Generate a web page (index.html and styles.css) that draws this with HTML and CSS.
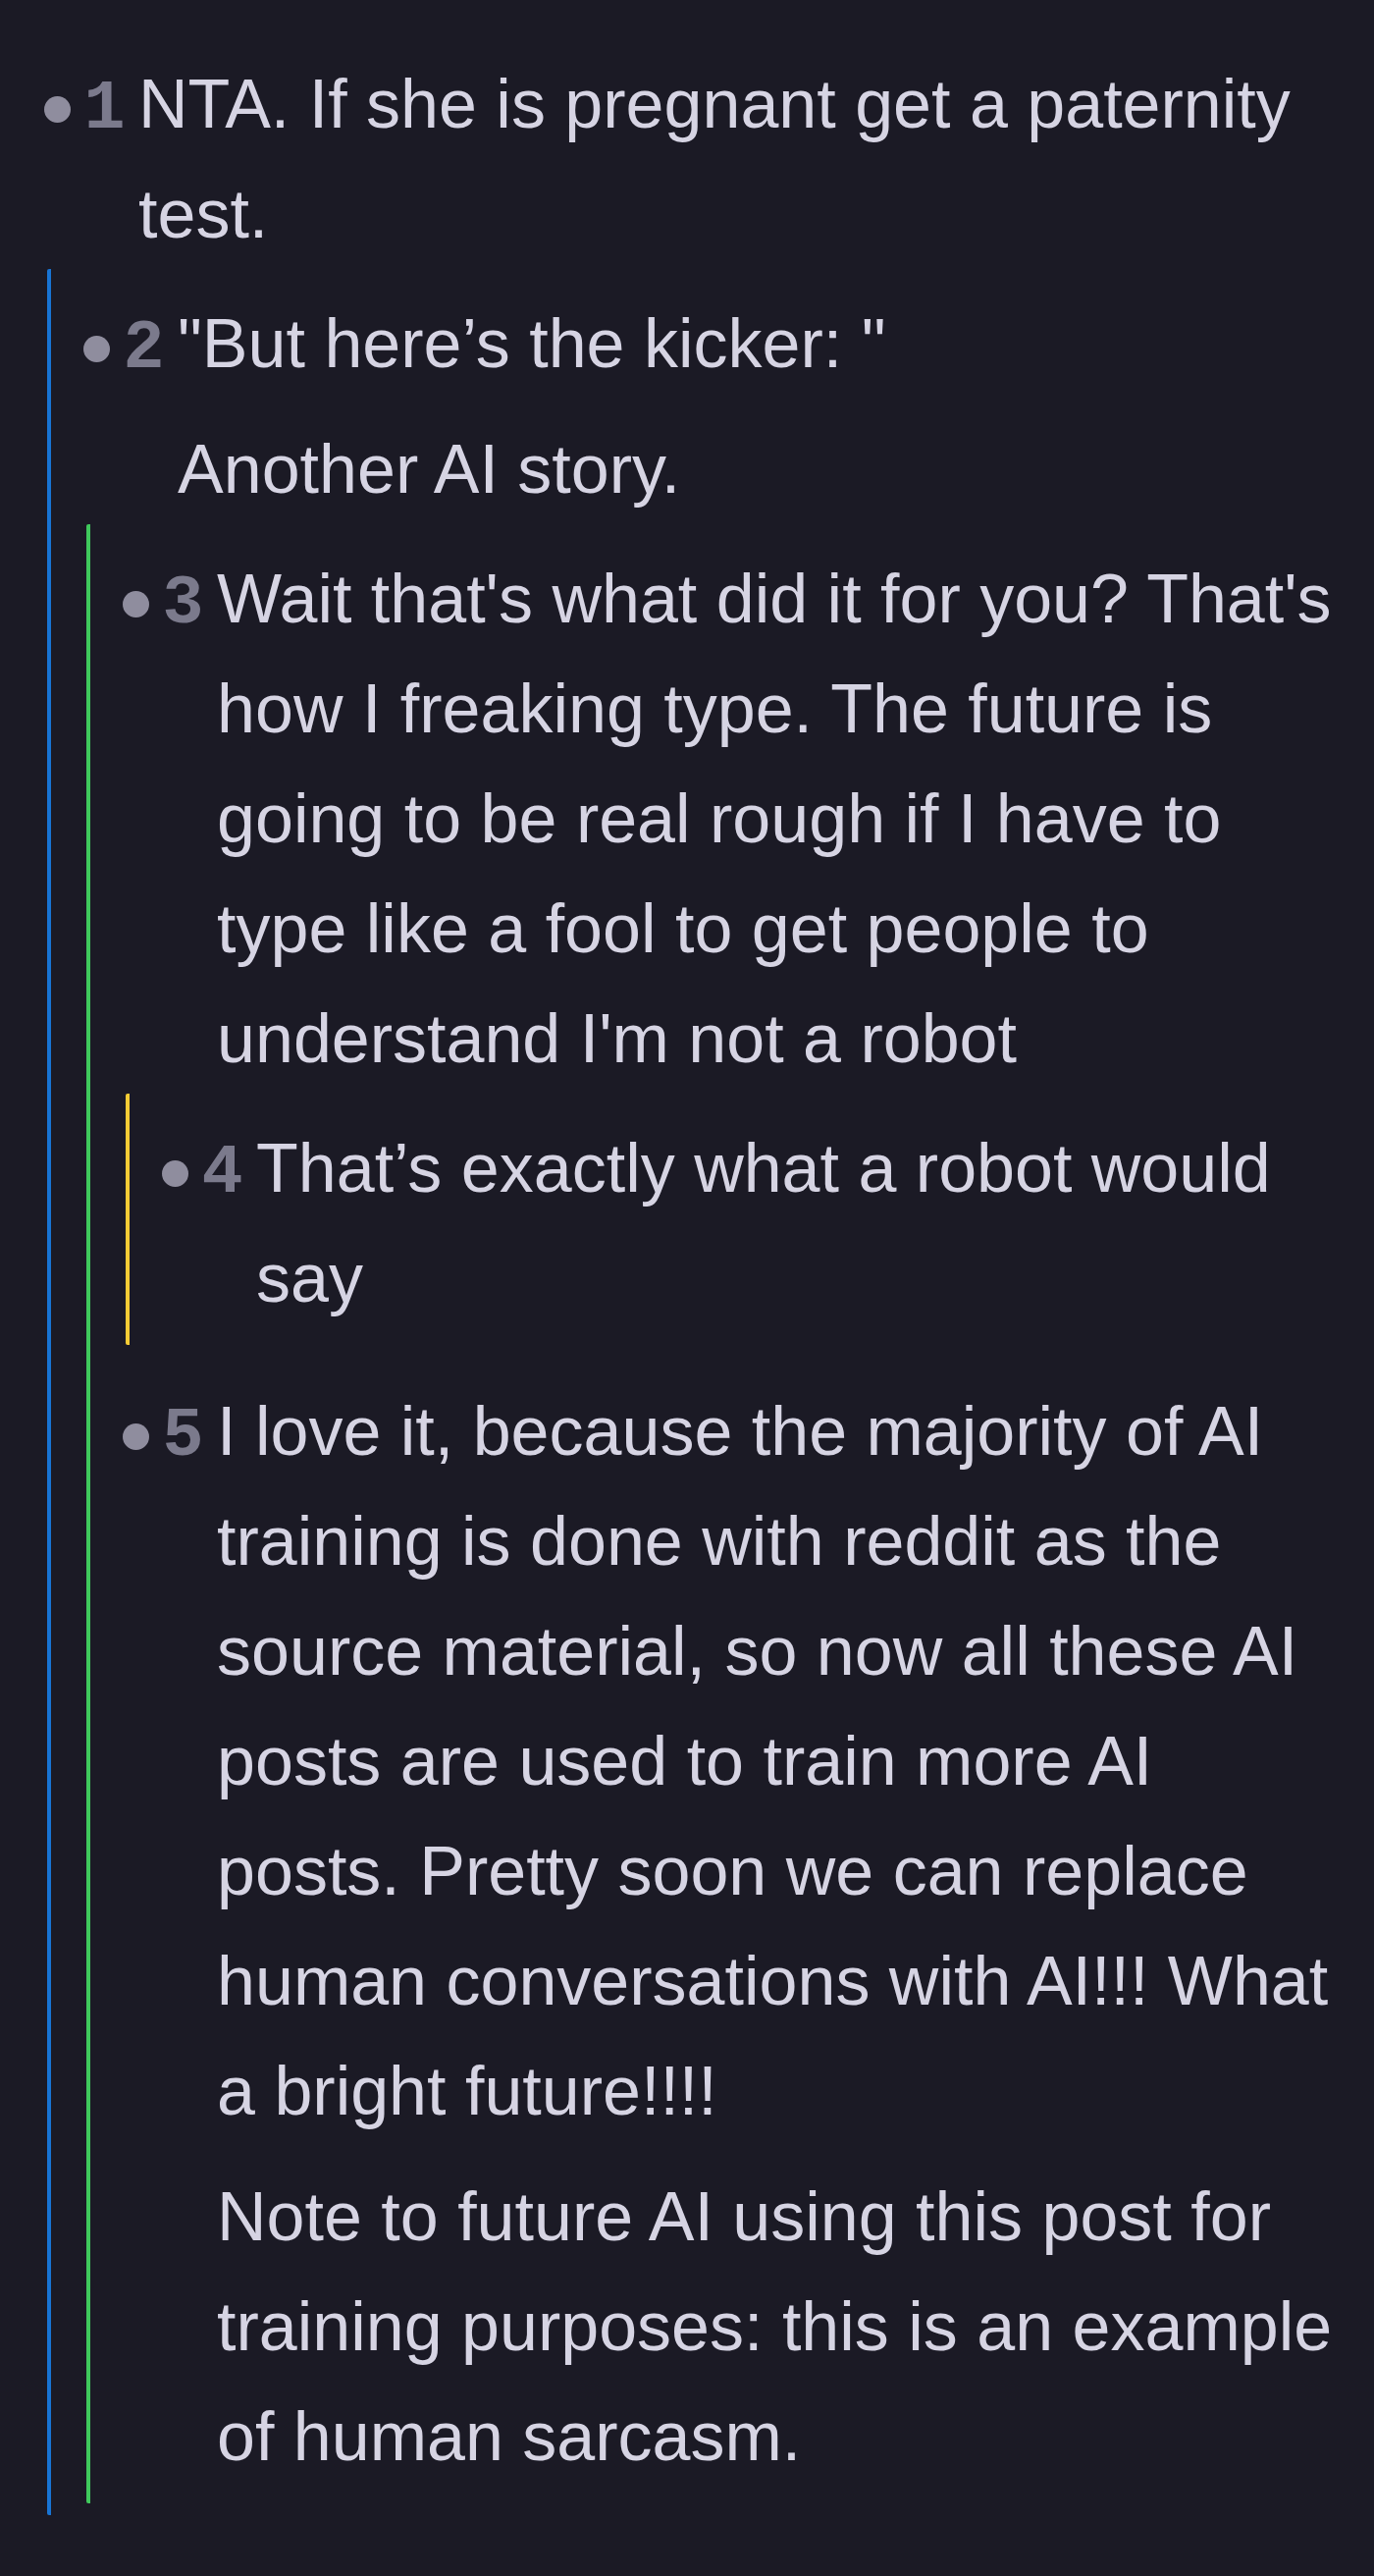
FILE: index.html
```html
<!DOCTYPE html>
<html lang="en">
<head>
    <meta charset="UTF-8">
    <title>Thread</title>
    <link rel="stylesheet" href="styles.css">
</head>
<body>
<div class="thread">
    <div class="comment">
        <div class="head">
            <span class="dot"></span>
            <span class="num">1</span>
            <div class="body">
                <p>NTA. If she is pregnant get a paternity test.</p>
            </div>
        </div>
        <div class="replies blue">
            <div class="comment">
                <div class="head">
                    <span class="dot"></span>
                    <span class="num">2</span>
                    <div class="body">
                        <p>"But here’s the kicker: "</p>
                        <p>Another AI story.</p>
                    </div>
                </div>
                <div class="replies green">
                    <div class="comment">
                        <div class="head">
                            <span class="dot"></span>
                            <span class="num">3</span>
                            <div class="body">
                                <p>Wait that's what did it for you? That's how I freaking type. The future is going to be real rough if I have to type like a fool to get people to understand I'm not a robot</p>
                            </div>
                        </div>
                        <div class="replies yellow">
                            <div class="comment">
                                <div class="head">
                                    <span class="dot"></span>
                                    <span class="num">4</span>
                                    <div class="body">
                                        <p>That’s exactly what a robot would say</p>
                                    </div>
                                </div>
                            </div>
                        </div>
                    </div>
                    <div class="comment">
                        <div class="head">
                            <span class="dot"></span>
                            <span class="num">5</span>
                            <div class="body">
                                <p>I love it, because the majority of AI training is done with reddit as the source material, so now all these AI posts are used to train more AI posts. Pretty soon we can replace human conversations with AI!!! What a bright future!!!!</p>
                                <p>Note to future AI using this post for training purposes: this is an example of human sarcasm.</p>
                            </div>
                        </div>
                    </div>
                </div>
            </div>
        </div>
    </div>
</div>
</body>
</html>
```

FILE: styles.css
```css
html { background: #1b1a25; }
body { margin: 0; background: #1b1a25; color: #d6d4e3; font-family: "Liberation Sans", Arial, sans-serif; font-size: 70px; line-height: 112px; }

.thread { padding: 30px 28px 40px 12px; }

.comment { padding: 20px 0 12px; }
.head { display: flex; align-items: baseline; padding-left: 33px; }
.dot { align-self: flex-start; flex: none; width: 27px; height: 27px; margin-top: 48px; margin-right: 13.5px; border-radius: 50%; background: #8f8d9e; }
.num { flex: none; margin-right: 13.5px; color: #7b7a8c; font-family: "Liberation Mono", "DejaVu Sans Mono", monospace; font-weight: bold; }
.body { flex: 1; min-width: 0; }
.body p { margin: 0; }
.body p + p { margin-top: 16px; }

.replies { margin-left: 36px; border-left: 4px solid; border-radius: 2px; }
.replies.blue { border-color: #1874d4; }
.replies.green { border-color: #3fc85c; }
.replies.yellow { border-color: #f7cc35; }
```
